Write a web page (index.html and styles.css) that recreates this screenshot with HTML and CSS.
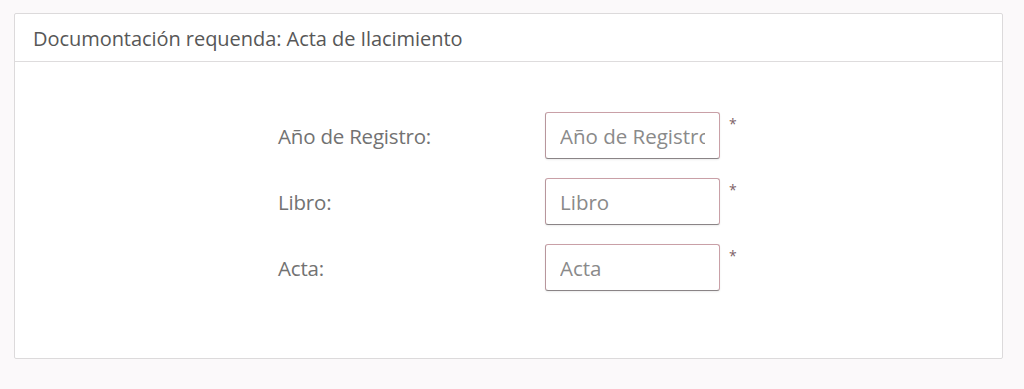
FILE: index.html
```html
<!DOCTYPE html>
<html>
	<head>
		<meta charset="UTF-8">
		<title>Acta de Nacimiento</title>
		<link rel="stylesheet" href="styles.css">
	</head>

	<body>
		<div class='panel'>
			<div class='panel-heading'>Documontación requenda: Acta de Ilacimiento</div>

			<div class='panel-body'>
				<form class='doc-form'>
					<label for='anio'>Año de Registro:</label>
					<input id='anio' type='text' placeholder='Año de Registro'>
					<span class='required'>*</span>

					<label for='libro'>Libro:</label>
					<input id='libro' type='text' placeholder='Libro'>
					<span class='required'>*</span>

					<label for='acta'>Acta:</label>
					<input id='acta' type='text' placeholder='Acta'>
					<span class='required'>*</span>
				</form>
			</div>
		</div>
	</body>
</html>
```

FILE: styles.css
```css
html, body {
	background-color: #fbf9fa;
}

body {
	margin: 0;
	padding: 13px 21px 0 14px;
	font-family: "Open Sans", sans-serif;
}

.panel {
	background-color: #fff;
	border: 1px solid #dcdadb;
	border-radius: 2px;
	height: 346px;
	box-sizing: border-box;
}

.panel-heading {
	height: 47px;
	line-height: 50px;
	padding-left: 18px;
	font-size: 20px;
	color: #575757;
	letter-spacing: -0.05px;
	border-bottom: 1px solid #dedcdd;
}

.panel-body {
	padding: 50px 0 0 263px;
}

.doc-form {
	display: grid;
	grid-template-columns: 267px 175px 20px;
	grid-auto-rows: 47px;
	row-gap: 19px;
	align-items: center;
}

.doc-form label {
	font-size: 20.5px;
	color: #727272;
	letter-spacing: -0.2px;
}

.doc-form input {
	height: 47px;
	box-sizing: border-box;
	padding: 0 14px;
	font-family: "Open Sans", sans-serif;
	font-size: 20.5px;
	color: #555;
	border: 1px solid #c9a0a7;
	border-bottom-color: #8a8486;
	border-left-color: #b8969c;
	border-radius: 3px;
	outline: none;
	box-shadow: 0 1px 2px rgba(0, 0, 0, 0.08);
}

.doc-form input::placeholder {
	color: #8a8a8a;
}

.required {
	align-self: start;
	margin-left: 9px;
	margin-top: 2px;
	font-size: 14px;
	color: #7e6268;
}
```
